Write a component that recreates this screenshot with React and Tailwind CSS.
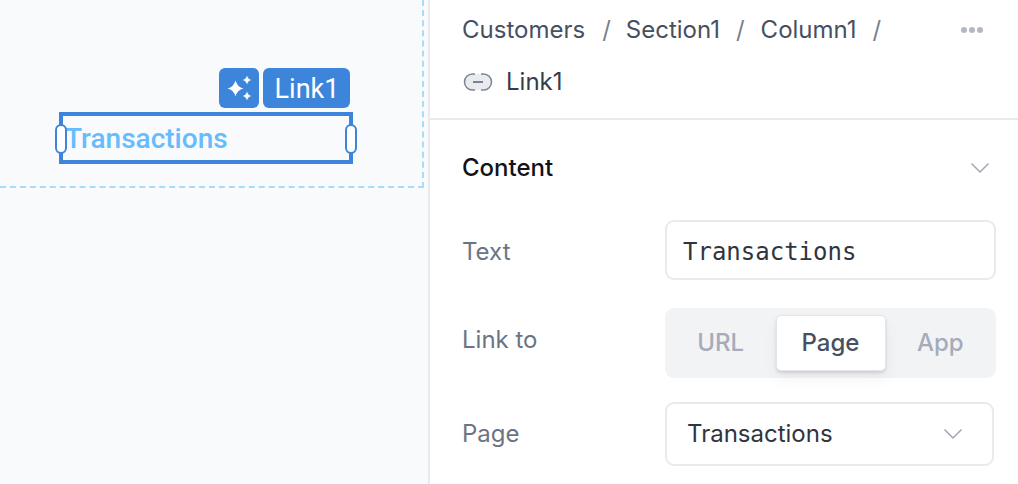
import React from 'react';

const star = (cx, cy, r) => {
  const k = r * 0.2;
  return `M${cx} ${cy - r} Q${cx + k} ${cy - k} ${cx + r} ${cy} Q${cx + k} ${cy + k} ${cx} ${cy + r} Q${cx - k} ${cy + k} ${cx - r} ${cy} Q${cx - k} ${cy - k} ${cx} ${cy - r}Z`;
};

const Sparkles = () => (
  <svg width="40" height="40" viewBox="0 0 40 40" fill="white">
    <path d={star(16.5, 20.5, 8)} />
    <path d={star(28, 12, 4.5)} />
    <path d={star(28, 28, 4.5)} />
  </svg>
);

const Chevron = () => (
  <svg width="20" height="12" viewBox="0 0 20 12" fill="none" stroke="#a1a6b3" strokeWidth="1.5">
    <path d="M1.500 1.500 L10 10 L18.500 1.500" />
  </svg>
);

const LinkIcon = () => (
  <svg width="30" height="22" viewBox="0 0 30 22" fill="none">
    <rect x="1.500" y="3" width="27" height="16" rx="8" fill="#e9ebef" />
    <path d="M12 3 H9.500 A8 8 0 0 0 9.500 19 H12 M18 3 H20.500 A8 8 0 0 1 20.500 19 H18" stroke="#7b8496" strokeWidth="1.5" />
    <path d="M10 11 H20" stroke="#7b8496" strokeWidth="2" />
  </svg>
);

const Canvas = () => (
  <div className="w-[428px] shrink-0 bg-[#f9fafc] border-r-2 border-[#e9eaee] box-content">
    <div className="h-[188px] w-[424px] border-r-2 border-b-2 border-dashed border-[#a8dcfa] pt-[68px] pl-[59px]">
      <div className="w-[294px]">
        <div className="flex justify-end gap-[4px] pr-[3px] h-[40px]">
          <div className="w-[40px] h-[40px] rounded-[6px] bg-[#3d85db]">
            <Sparkles />
          </div>
          <div className="w-[87px] h-[40px] pt-[2px] pl-[1px] rounded-[6px] bg-[#3d85db] flex items-center justify-center text-white text-[27px] font-['Roboto',sans-serif]">
            Link1
          </div>
        </div>
        <div className="relative mt-[4px] h-[52px] border-4 border-[#3d85db] flex items-center pl-[2px] pt-[1px]">
          <span className="text-[#66bcfd] text-[28px] font-medium font-['Roboto',sans-serif]">Transactions</span>
          <div className="absolute left-[-8px] top-[8px] w-[12px] h-[30px] rounded-full bg-white border-2 border-[#3d85db]" />
          <div className="absolute right-[-8px] top-[8px] w-[12px] h-[30px] rounded-full bg-white border-2 border-[#3d85db]" />
        </div>
      </div>
    </div>
  </div>
);

const Row = ({ label, className, labelClass, children }) => (
  <div className={`flex items-center ${className}`}>
    <div className={`w-[203px] text-[24px] text-[#6b7485] shrink-0 ${labelClass || ''}`}>{label}</div>
    {children}
  </div>
);

const Inspector = () => (
  <div className="flex-1 min-w-0 bg-white font-['Inter',sans-serif]">
    <div className="h-[120px] border-b-2 border-[#e9eaee] px-[32px] pt-[12px]">
      <div className="flex items-center h-[36px] text-[24px] text-[#474f61]">
        <span>Customers</span>
        <span className="ml-[17px] text-[#787f8c]">/</span>
        <span className="ml-[15px]">Section1</span>
        <span className="ml-[16px] text-[#787f8c]">/</span>
        <span className="ml-[16px]">Column1</span>
        <span className="ml-[16px] text-[#787f8c]">/</span>
        <div className="ml-auto mr-[3px] flex gap-[2px]">
          <span className="w-[6px] h-[6px] rounded-full bg-[#b4b8c4]" />
          <span className="w-[6px] h-[6px] rounded-full bg-[#b4b8c4]" />
          <span className="w-[6px] h-[6px] rounded-full bg-[#b4b8c4]" />
        </div>
      </div>
      <div className="flex items-center h-[36px] mt-[16px] pl-[1px] gap-[13px] text-[24px] text-[#363c49]">
        <LinkIcon />
        <span>Link1</span>
      </div>
    </div>
    <div className="pl-[32px] pr-[22px]">
      <div className="flex items-center justify-between h-[36px] mt-[30px] pr-[6px]">
        <span className="text-[24px] font-[450] text-[#111318]">Content</span>
        <Chevron />
      </div>
      <Row label="Text" labelClass="mt-[3px]" className="mt-[34px]">
        <div className="w-[331px] h-[60px] pt-[4px] rounded-[9px] border-2 border-[#e9eaee] flex items-center pl-[16px] text-[24px] text-[#2f3540] font-['DejaVu_Sans_Mono',monospace]">
          Transactions
        </div>
      </Row>
      <Row label="Link to" labelClass="mb-[6px]" className="mt-[28px]">
        <div className="w-[331px] h-[70px] rounded-[9px] bg-[#f2f3f5] flex items-center px-[7px] text-[24px] font-medium text-[#a6abba]">
          <div className="flex-1 text-center pr-[6px]">URL</div>
          <div className="w-[110px] h-[56px] rounded-[5px] bg-white border border-[#e4e5ea] shadow-[0_2px_3px_rgba(20,25,40,0.12),0_8px_16px_rgba(20,25,40,0.05)] flex items-center justify-center text-[#474f61]">
            Page
          </div>
          <div className="flex-1 text-center pl-[6px]">App</div>
        </div>
      </Row>
      <Row label="Page" className="mt-[24px]">
        <div className="w-[329px] h-[64px] rounded-[9px] border-2 border-[#e9eaee] flex items-center justify-between pl-[20px] pr-[29px] text-[24px] text-[#2f3540]">
          <span>Transactions</span>
          <Chevron />
        </div>
      </Row>
    </div>
  </div>
);

export default function App() {
  return (
    <div className="flex w-[1018px] h-[484px] overflow-hidden">
      <Canvas />
      <Inspector />
    </div>
  );
}
